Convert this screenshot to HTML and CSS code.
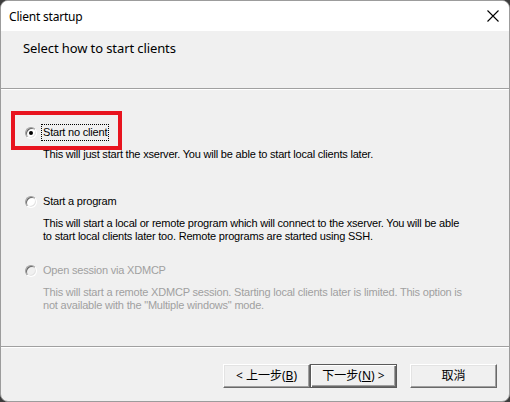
FILE: index.html
```html
<!DOCTYPE html>
<html lang="en">
<head>
<meta charset="utf-8">
<title>Client startup</title>
<link rel="stylesheet" href="styles.css">
</head>
<body>
<div class="window">
  <div class="titlebar">
    <span class="title">Client startup</span>
    <svg class="close" width="12" height="12" viewBox="0 0 12 12"><path d="M0.5 0.5 L11.5 11.5 M11.5 0.5 L0.5 11.5" stroke="#000" stroke-width="1.1" fill="none"/></svg>
  </div>
  <div class="header">Select how to start clients</div>
  <div class="sep"></div>
  <div class="content">
    <div class="option">
      <div class="choice">
        <span class="radio checked"></span>
        <span class="label focus">Start no client</span>
      </div>
      <p class="desc">This will just start the xserver. You will be able to start local clients later.</p>
      <div class="highlight"></div>
    </div>
    <div class="option">
      <div class="choice">
        <span class="radio"></span>
        <span class="label">Start a program</span>
      </div>
      <p class="desc">This will start a local or remote program which will connect to the xserver. You will be able<br>to start local clients later too. Remote programs are started using SSH.</p>
    </div>
    <div class="option disabled">
      <div class="choice">
        <span class="radio"></span>
        <span class="label">Open session via XDMCP</span>
      </div>
      <p class="desc">This will start a remote XDMCP session. Starting local clients later is limited. This option is<br>not available with the "Multiple windows" mode.</p>
    </div>
  </div>
  <div class="sep"></div>
  <div class="footer">
    <button class="btn">&lt; 上一步(<u>B</u>)</button>
    <button class="btn default">下一步(<u>N</u>) &gt;</button>
    <button class="btn cancel">取消</button>
  </div>
</div>
</body>
</html>
```

FILE: styles.css
```css
html, body {
  margin: 0;
  padding: 0;
}
body {
  width: 510px;
  height: 402px;
  background: #3c3c3c;
  overflow: hidden;
}
.window {
  box-sizing: border-box;
  width: 510px;
  height: 402px;
  border: 1px solid #9c9c9c;
  border-radius: 8px;
  background: #f0f0f0;
  overflow: hidden;
  display: flex;
  flex-direction: column;
  font-family: "Liberation Sans", Arial, sans-serif;
  font-size: 11px;
  letter-spacing: -0.2px;
  color: #000;
}
.titlebar {
  height: 30px;
  flex: none;
  background: #fff;
  display: flex;
  align-items: center;
  justify-content: space-between;
  padding: 0 9px 0 8px;
}
.title {
  font-family: "Noto Sans", "Open Sans", sans-serif;
  font-size: 12px;
  letter-spacing: -0.2px;
}
.close {
  display: block;
  margin-right: 1px;
}
.header {
  height: 57px;
  flex: none;
  box-sizing: border-box;
  padding: 9px 0 0 22px;
  font-family: "Noto Sans", "Open Sans", sans-serif;
  font-size: 13px;
  line-height: 16px;
  letter-spacing: -0.1px;
}
.sep {
  height: 1px;
  flex: none;
  background: #a0a0a0;
  border-bottom: 1px solid #fff;
}
.content {
  height: 256px;
  flex: none;
  box-sizing: border-box;
  padding: 34px 0 0 24px;
}
.option {
  position: relative;
  height: 69px;
}
.choice {
  display: flex;
  align-items: center;
  height: 17px;
}
.radio {
  position: relative;
  box-sizing: border-box;
  width: 12px;
  height: 12px;
  border-radius: 50%;
  border: 1px solid;
  border-color: #a0a0a0 #fff #fff #a0a0a0;
  box-shadow: inset 1px 1px 0 #696969, inset -1px -1px 0 #e3e3e3;
  background: #fff;
  flex: none;
}
.radio.checked::after {
  content: "";
  position: absolute;
  left: 3px;
  top: 3px;
  width: 4px;
  height: 4px;
  border-radius: 50%;
  background: #000;
}
.label {
  margin-left: 4px;
  padding: 1px 1px;
  line-height: 13px;
  border: 1px dotted transparent;
}
.label.focus {
  border-color: #000;
}
.desc {
  margin: 7px 0 0 18px;
  line-height: 12.5px;
}
.disabled {
  color: #a0a0a0;
}
.disabled .radio {
  background: #f0f0f0;
}
.highlight {
  position: absolute;
  left: -14px;
  top: -13px;
  width: 111px;
  height: 39px;
  box-sizing: border-box;
  border: 4px solid #e8141f;
}
.footer {
  flex: 1;
  display: flex;
  justify-content: flex-end;
  align-items: flex-start;
  padding: 16px 12px 0 0;
}
.btn {
  box-sizing: border-box;
  width: 87px;
  height: 24px;
  margin: 0;
  padding: 0;
  background: #f0f0f0;
  border: 1px solid;
  border-color: #fff #696969 #696969 #fff;
  box-shadow: inset -1px -1px 0 #a0a0a0, inset 1px 1px 0 #e3e3e3;
  font-family: "Noto Sans", "Noto Sans CJK TC", sans-serif;
  font-size: 12px;
  color: #000;
  line-height: 20px;
}
.btn u {
  text-decoration-thickness: 1px;
  text-underline-offset: 1px;
}
.btn.default {
  border: 1px solid #5a5a5a;
  box-shadow: inset 1px 1px 0 #fff, inset -1px -1px 0 #696969, inset -2px -2px 0 #a0a0a0;
}
.btn.cancel {
  margin-left: 13px;
}
```
